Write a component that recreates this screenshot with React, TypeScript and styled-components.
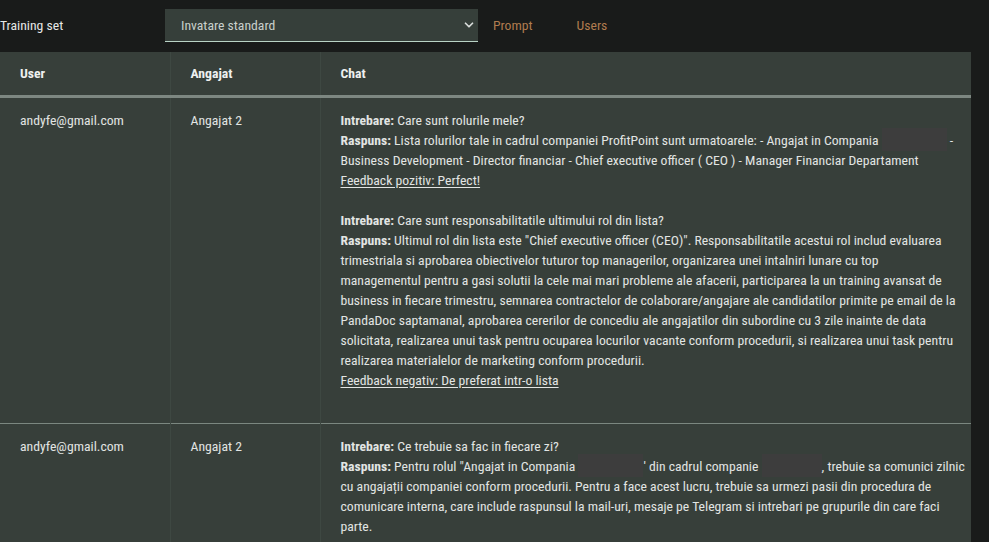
import React, { useState } from 'react';
import styled, { createGlobalStyle } from 'styled-components';
import { ChevronDown } from 'lucide-react';

const GlobalStyle = createGlobalStyle`
  html, body {
    margin: 0;
    padding: 0;
    background: #191b1a;
  }
  body {
    font-family: "Roboto Condensed", "Liberation Sans Narrow", Roboto, sans-serif;
    color: #e4e6e5;
    font-size: 13.7px;
  }
`;

const Page = styled.div`
  width: 971px;
`;

const TopBar = styled.div`
  display: flex;
  align-items: center;
  height: 50px;
  padding-bottom: 2px;
`;

const BarLabel = styled.div`
  width: 165px;
  color: #e6e8e7;
`;

const SelectBox = styled.div`
  position: relative;
  width: 313px;
  height: 33px;
  background: #363f3a;
  border-bottom: 1px solid #b9d3c6;
  box-sizing: border-box;
  display: flex;
  align-items: center;
  padding: 0 16px;
  color: #c9d0cc;
`;

const Chevron = styled.span`
  position: absolute;
  right: 2px;
  top: 9px;
  color: #d8dcda;
  display: flex;
`;

const NavLink = styled.a<{ gap?: number }>`
  margin-left: ${p => p.gap ?? 15}px;
  color: #b07b4f;
  text-decoration: none;
  cursor: pointer;
`;

const Table = styled.table`
  width: 971px;
  border-collapse: collapse;
  background: #373f3a;
`;

const HeadCell = styled.th<{ w?: number }>`
  width: ${p => (p.w ? `${p.w}px` : 'auto')};
  height: 44px;
  padding: 0 20px;
  box-sizing: border-box;
  text-align: left;
  font-weight: 700;
  color: #eef0ef;
  border-bottom: 3px solid #7d8781;
  border-left: 1px solid #3e4842;
  &:first-child {
    border-left: none;
  }
`;

const Row = styled.tr`
  border-top: 1px solid #7b8780;
  &:first-child {
    border-top: none;
  }
`;

const Cell = styled.td`
  vertical-align: top;
  padding: 12px 20px 13px;
  line-height: 20px;
  color: #e2e5e3;
  border-left: 1px solid #3e4842;
  &:first-child {
    border-left: none;
  }
`;

const ChatCell = styled(Cell)`
  padding-right: 6px;
`;

const Block = styled.div`
  margin-bottom: 20px;
`;

const Tag = styled.b`
  font-weight: 700;
`;

const Feedback = styled.a`
  display: block;
  color: #e2e5e3;
  text-decoration: underline;
  text-underline-offset: 2px;
`;

const Redacted = styled.span<{ w: number }>`
  display: inline-block;
  width: ${p => p.w}px;
  height: 23px;
  margin: -2px 0 -1px;
  vertical-align: top;
  background: #3d3d3d;
`;

type Entry = {
  q: string;
  a: React.ReactNode;
  feedback?: string;
};

type ChatRow = {
  user: string;
  employee: string;
  entries: Entry[];
};

const rows: ChatRow[] = [
  {
    user: 'andyfe@gmail.com',
    employee: 'Angajat 2',
    entries: [
      {
        q: 'Care sunt rolurile mele?',
        a: (
          <>
            Lista rolurilor tale in cadrul companiei ProfitPoint sunt urmatoarele: - Angajat in Compania{' '}
            <Redacted w={65} /> - Business Development - Director financiar - Chief executive officer ( CEO ) -
            Manager Financiar Departament
          </>
        ),
        feedback: 'Feedback pozitiv: Perfect!',
      },
      {
        q: 'Care sunt responsabilitatile ultimului rol din lista?',
        a: (
          <>
            Ultimul rol din lista este "Chief executive officer (CEO)". Responsabilitatile acestui rol includ
            evaluarea trimestriala si aprobarea obiectivelor tuturor top managerilor, organizarea unei intalniri
            lunare cu top managementul{'\u00a0'}pentru a gasi solutii la cele mai mari probleme ale afacerii,
            participarea la un training avansat de business in fiecare trimestru, semnarea contractelor de
            colaborare/angajare ale candidatilor primite pe email de la PandaDoc saptamanal, aprobarea cererilor de
            concediu ale angajatilor din subordine cu 3 zile inainte de data solicitata, realizarea unui task pentru
            ocuparea locurilor vacante conform procedurii, si realizarea unui task pentru realizarea materialelor de
            marketing conform procedurii.
          </>
        ),
        feedback: 'Feedback negativ: De preferat intr-o lista',
      },
    ],
  },
  {
    user: 'andyfe@gmail.com',
    employee: 'Angajat 2',
    entries: [
      {
        q: 'Ce trebuie sa fac in fiecare zi?',
        a: (
          <>
            Pentru rolul "Angajat in Compania <Redacted w={65} />' din cadrul companie <Redacted w={60} />, trebuie
            sa comunici zilnic cu angajații companiei conform procedurii. Pentru a face acest lucru, trebuie sa
            urmezi pasii din procedura de comunicare interna, care include raspunsul la mail-uri, mesaje pe Telegram
            si intrebari pe grupurile din care faci parte.
          </>
        ),
      },
    ],
  },
];

export default function App() {
  const [set] = useState('Invatare standard');

  return (
    <Page>
      <GlobalStyle />
      <TopBar>
        <BarLabel>Training set</BarLabel>
        <SelectBox>
          {set}
          <Chevron>
            <ChevronDown size={14} strokeWidth={3} />
          </Chevron>
        </SelectBox>
        <NavLink>Prompt</NavLink>
        <NavLink gap={44}>Users</NavLink>
      </TopBar>
      <Table>
        <thead>
          <tr>
            <HeadCell w={170}>User</HeadCell>
            <HeadCell w={150}>Angajat</HeadCell>
            <HeadCell>Chat</HeadCell>
          </tr>
        </thead>
        <tbody>
          {rows.map((row, i) => (
            <Row key={i}>
              <Cell>{row.user}</Cell>
              <Cell>{row.employee}</Cell>
              <ChatCell>
                {row.entries.map((e, j) => (
                  <Block key={j}>
                    <Tag>Intrebare:</Tag> {e.q}
                    <br />
                    <Tag>Raspuns:</Tag> {e.a}
                    {e.feedback && <Feedback>{e.feedback}</Feedback>}
                  </Block>
                ))}
              </ChatCell>
            </Row>
          ))}
        </tbody>
      </Table>
    </Page>
  );
}
